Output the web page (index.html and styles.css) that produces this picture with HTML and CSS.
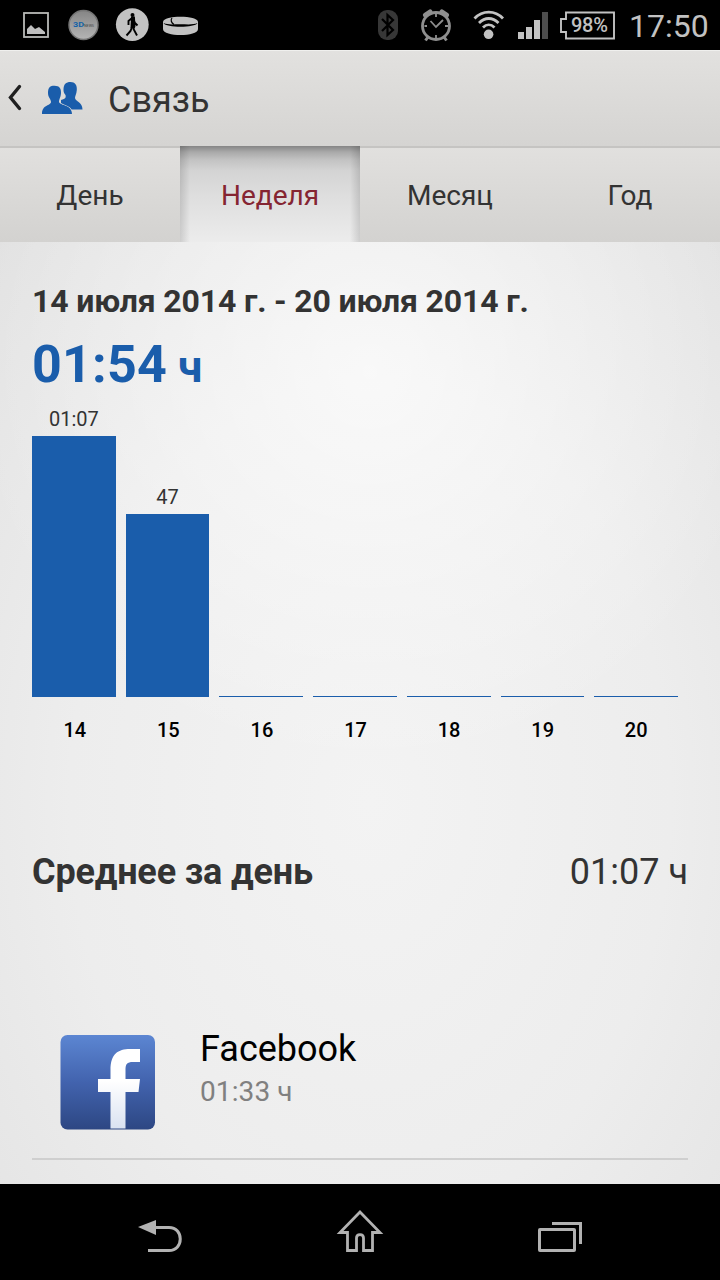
FILE: index.html
```html
<!DOCTYPE html>
<html lang="ru">
<head>
  <meta charset="UTF-8" />
  <meta name="viewport" content="width=device-width, initial-scale=1.0" />
  <title>Связь</title>
  <link rel="stylesheet" href="styles.css">
</head>
<body>
  <div class="statusbar">
    <svg class="status-icons" width="210" height="50" viewBox="0 0 210 50">
      <defs>
        <linearGradient id="coin" x1="0" y1="0" x2="0" y2="1">
          <stop offset="0" stop-color="#858585" />
          <stop offset="1" stop-color="#b5b5b5" />
        </linearGradient>
      </defs>
      <rect x="24" y="13" width="24" height="24" fill="none" stroke="#b9bab7" stroke-width="1.8" />
      <path d="M27 34V29L31 25L35 29L39 27L45 32V34Z" fill="#bebebe" />
      <circle cx="83.500" cy="25" r="14.500" fill="url(#coin)" stroke="#757575" stroke-width="1.500" />
      <text x="73" y="27.200" class="coin-text" textLength="11" lengthAdjust="spacingAndGlyphs">3D</text>
      <text x="84" y="27" class="coin-small" textLength="10" lengthAdjust="spacingAndGlyphs">NEWS</text>
      <circle cx="132.300" cy="24.600" r="16.400" fill="#c2c2c2" />
      <circle cx="132.500" cy="15" r="2" fill="#000" />
      <path d="M131 17.500L134 17.500L134.500 26L133.500 29L137 35.500M132 27L130.500 31L126.500 35.500M131.500 18.500L128.500 21V25M133.500 19L135 23L137.500 25.500" fill="none" stroke="#000" stroke-width="1.900" />
      <path d="M131 18H134.300V28H130.500Z" fill="#000" />
      <path d="M163 22C163 15 198 15 198 22V29C198 37 163 37 163 29Z" fill="#c2c2c2" />
      <path d="M163.500 23C166 28 195 28 197.500 23C193 25 187 24.300 180 24.200C173 24.300 168 25 163.500 23Z" fill="#000" />
      <path d="M172 18C170.500 20 171 22.500 174 24.500" fill="none" stroke="#000" stroke-width="1.200" />
    </svg>
    <div class="status-right">
      <svg width="176" height="50" viewBox="374 0 176 50">
        <rect x="378" y="10" width="20" height="30" rx="9" fill="#373737" />
        <path d="M382 19L393 30L387.500 35V15L393 20L382 31" fill="none" stroke="#000" stroke-width="2.200" />
        <g fill="none" stroke="#8f8f8f">
          <circle cx="436" cy="26" r="13.500" stroke-width="2.800" />
          <path d="M425.500 15L430 12M442 12L446.500 15" stroke-width="5" stroke-linecap="round" />
          <path d="M428 37L425.500 40.500M444 37L446.500 40.500" stroke-width="3" />
          <path d="M430.500 21L436 27L443 20M436 14V17M436 35V38M424.500 26H427M445 26H448" stroke-width="1.800" />
        </g>
        <circle cx="488.600" cy="34.300" r="4.800" fill="#c2c2c2" />
        <path d="M474.500 18.500C482.500 10 495 10 503 18.500M479 23C485 17 492.500 17 498.500 23M483 27.500C486.500 24 491 24 494.500 27.500" fill="none" stroke="#c2c2c2" stroke-width="2.800" />
        <path d="M518 32H524V39H518ZM526 27H532V39H526ZM534 20H540V39H534Z" fill="#c2c2c2" />
        <rect x="542" y="12" width="6" height="27" fill="#4d4d4d" />
      </svg>
      <div class="battery">
        <svg width="56" height="29" viewBox="0 0 56 29">
          <path d="M6 1.500H54V27.500H6V21H1V8H6Z" fill="none" stroke="#c2c2c2" stroke-width="1.900" />
        </svg>
        <span class="battery-level">98%</span>
      </div>
      <div class="clock">17:50</div>
    </div>
  </div>

  <div class="header">
    <svg width="90" height="96" viewBox="0 0 90 96">
      <path d="M19.500 35.500L10.500 46.500L19.500 57.500" fill="none" stroke="#202020" stroke-width="3.400" stroke-linecap="round" />
      <g fill="#1a5dab" transform="translate(0 -1)">
        <path d="M63.500 40C63.500 34 66 32 70.500 32C75 32 77.300 35 76.800 40C76.500 44 75 46 75 48C75.500 51.500 82.500 52 82.500 59.500H61V50C66 49 66 47 65.500 45C64 43 63.500 42 63.500 40Z" />
        <path d="M48 43C48 37.500 50 35.700 54.500 35.700C59.500 35.700 61.200 38.500 61 43C60.800 47.500 59 49 59 52C60.500 56 72 54.500 72 64H42C42 54.500 50.500 56 51 52C51 49 48 47.500 48 43Z" stroke="#dddcda" stroke-width="1.200" paint-order="stroke" />
      </g>
    </svg>
    <h1>Связь</h1>
  </div>

  <div class="tabs">
    <div class="tab">День</div>
    <div class="tab active">Неделя</div>
    <div class="tab">Месяц</div>
    <div class="tab">Год</div>
  </div>

  <div class="content">
    <div class="period">14 июля 2014 г. - 20 июля 2014 г.</div>
    <div class="total">01:54<span class="unit">ч</span></div>

    <div class="chart">
      <div class="column"><span class="value">01:07</span><div class="bar" style="height: 261px"></div></div>
      <div class="column"><span class="value">47</span><div class="bar" style="height: 183px"></div></div>
      <div class="column"><div class="bar" style="height: 1px"></div></div>
      <div class="column"><div class="bar" style="height: 1px"></div></div>
      <div class="column"><div class="bar" style="height: 1px"></div></div>
      <div class="column"><div class="bar" style="height: 1px"></div></div>
      <div class="column"><div class="bar" style="height: 1px"></div></div>
    </div>
    <div class="days">
      <span>14</span>
      <span>15</span>
      <span>16</span>
      <span>17</span>
      <span>18</span>
      <span>19</span>
      <span>20</span>
    </div>

    <div class="average">
      <span class="average-label">Среднее за день</span>
      <span class="average-value">01:07 ч</span>
    </div>

    <div class="app">
      <svg width="96" height="96" viewBox="0 0 96 96">
        <defs>
          <linearGradient id="fb" x1="0" y1="0" x2="0" y2="1">
            <stop offset="0" stop-color="#5c86d2" />
            <stop offset="0.500" stop-color="#4263ae" />
            <stop offset="1" stop-color="#2d4783" />
          </linearGradient>
          <linearGradient id="fbMark" x1="0" y1="0" x2="0" y2="1">
            <stop offset="0.400" stop-color="#fff" />
            <stop offset="1" stop-color="#dae2f1" />
          </linearGradient>
        </defs>
        <rect x="0.500" y="1" width="94.500" height="94.500" rx="7" fill="url(#fb)" />
        <path d="M50.500 94.500V58H38V45H50.500V36C50.500 20 58 15 70 15H80V28H73C67 28 65.500 30 65.500 36V45H80L78.500 58H65.500V94.500Z" fill="url(#fbMark)" />
      </svg>
      <div class="app-info">
        <div class="app-name">Facebook</div>
        <div class="app-time">01:33 ч</div>
      </div>
    </div>
  </div>

  <div class="navbar">
    <svg width="720" height="96" viewBox="0 0 720 96" fill="none" stroke="#b2b2b2" stroke-width="3">
      <path d="M155 43.500H169C184 43.500 184 66.500 169 66.500H148" />
      <path d="M138 43L156 36V51Z" fill="#b2b2b2" stroke="none" />
      <path d="M360 28L340 48.500H347.500V66.500H356.500V54C356.500 49.500 363.500 49.500 363.500 54V66.500H372.500V48.500H380Z" stroke-width="2.800" />
      <rect x="539.500" y="45.500" width="35" height="21" rx="0.500" />
      <path d="M552 39.500H580.500V60" />
    </svg>
  </div>
</body>
</html>
```
FILE: styles.css
```css
* {
  box-sizing: border-box;
}

body {
  margin: 0;
  width: 720px;
  height: 1280px;
  overflow: hidden;
  display: flex;
  flex-direction: column;
  font-family: Roboto, "Noto Sans", sans-serif;
  color: #333;
  background: #000;
}

svg {
  display: block;
  flex: none;
}

.statusbar {
  height: 50px;
  flex: none;
  display: flex;
  justify-content: space-between;
  background: #000;
  color: #c2c2c2;
}

.coin-text {
  font-size: 7px;
  font-weight: bold;
  fill: #1262a8;
}

.coin-small {
  font-size: 4px;
  fill: #444;
}

.status-right {
  display: flex;
  align-items: center;
  padding-right: 11px;
}

.battery {
  position: relative;
  margin: 0 13px 0 10px;
}

.battery-level {
  position: absolute;
  left: 11px;
  top: 2px;
  font-size: 20px;
  line-height: 24px;
  font-weight: 500;
  letter-spacing: -0.3px;
}

.clock {
  width: 80px;
  font-size: 32px;
  line-height: 50px;
  padding-top: 2px;
  white-space: nowrap;
}

.header {
  height: 98px;
  flex: none;
  display: flex;
  background: linear-gradient(#e2e1df, #d5d4d2);
  border-top: 1px solid #f0f0ee;
  border-bottom: 2px solid #c5c4c2;
}

.header h1 {
  margin: 0 0 0 18px;
  font-size: 36px;
  font-weight: normal;
  line-height: 98px;
}

.tabs {
  height: 94px;
  flex: none;
  display: grid;
  grid-template-columns: repeat(4, 1fr);
  background: linear-gradient(#e1e0de, #d3d2d0);
}

.tab {
  font-size: 28px;
  line-height: 96px;
  height: 94px;
  text-align: center;
}

.tab.active {
  color: #852532;
  margin-top: -2px;
  height: 96px;
  line-height: 100px;
  background: linear-gradient(to right, rgba(0, 0, 0, 0.13), transparent 10px, transparent 170px, rgba(0, 0, 0, 0.13)),
    linear-gradient(#858585, #a9a9a9 6px, #c3c3c3 14px, #d4d4d4 25px, #dedede 50px, #ececec);
}

.content {
  height: 942px;
  flex: none;
  padding: 38px 32px 0;
  background: radial-gradient(circle 400px at 370px 130px, rgba(255, 255, 255, 0.65), rgba(255, 255, 255, 0)),
    radial-gradient(ellipse 600px 850px at 370px 560px, #f3f3f3, #ededed 50%, #dfdfdf);
}

.period {
  font-size: 32px;
  line-height: 42px;
  font-weight: bold;
  letter-spacing: -0.16px;
}

.total {
  height: 80px;
  font-size: 52px;
  line-height: 86px;
  font-weight: bold;
  letter-spacing: 0.2px;
  color: #1a5dab;
}

.unit {
  margin-left: 11px;
  font-size: 44px;
}

.chart {
  width: 646px;
  height: 291px;
  display: grid;
  grid-template-columns: repeat(7, 1fr);
  gap: 10px;
}

.column {
  display: flex;
  flex-direction: column;
  justify-content: flex-end;
}

.value {
  font-size: 20px;
  line-height: 34px;
  text-align: center;
}

.bar {
  background: #1a5dab;
}

.days {
  width: 646px;
  margin-top: 21px;
  padding-left: 1px;
  display: grid;
  grid-template-columns: repeat(7, 1fr);
  gap: 10px;
  font-size: 20px;
  line-height: 32px;
  font-weight: 500;
  text-align: center;
  color: #000;
}

.average {
  margin-top: 101px;
  display: flex;
  justify-content: space-between;
  font-size: 36px;
  line-height: 50px;
}

.average-label {
  font-weight: bold;
  letter-spacing: -0.15px;
}

.app {
  margin-top: 113px;
  height: 150px;
  padding: 24px 28px 0;
  display: flex;
  border-bottom: 2px solid #cfcfcf;
}

.app-info {
  margin-left: 44px;
}

.app-name {
  font-size: 36px;
  line-height: 30px;
  color: #000;
}

.app-time {
  font-size: 28px;
  line-height: 56px;
  letter-spacing: 0.1px;
  color: #808080;
}

.navbar {
  height: 96px;
  flex: none;
  background: #000;
}
```
